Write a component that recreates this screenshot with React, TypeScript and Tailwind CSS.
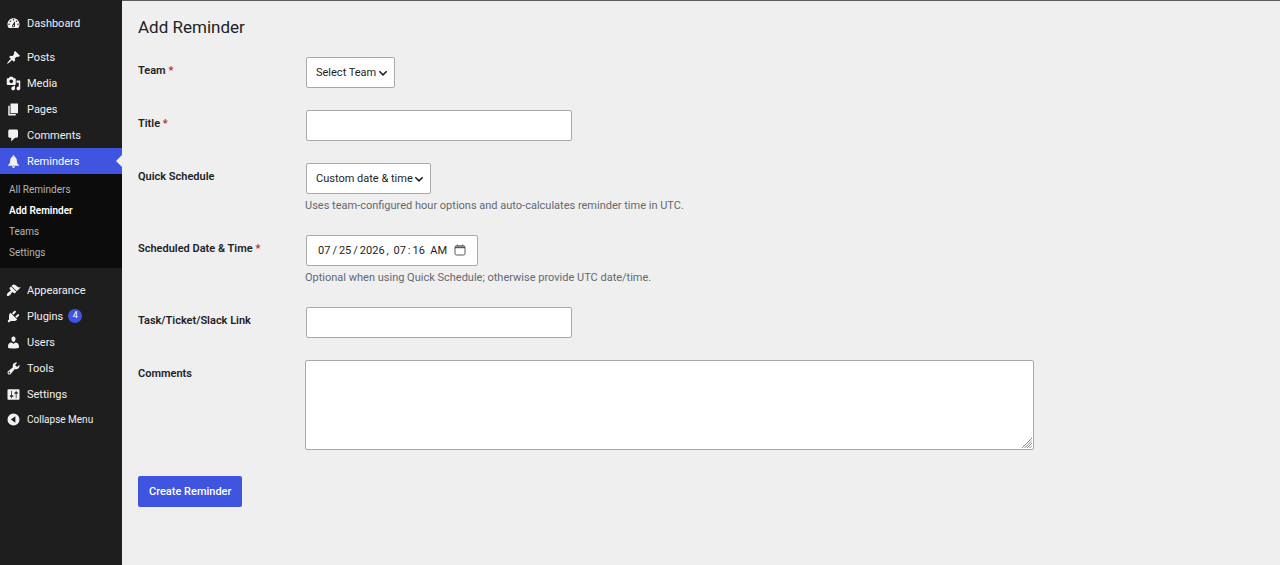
import type { ReactNode } from "react";

const icons = {
  dashboard:
    "M3.76 16h12.48c1.1-1.37 1.76-3.11 1.76-5 0-4.42-3.58-8-8-8s-8 3.58-8 8c0 1.89.66 3.63 1.76 5zM10 4c.55 0 1 .45 1 1s-.45 1-1 1-1-.45-1-1 .45-1 1-1zM6 6c.55 0 1 .45 1 1s-.45 1-1 1-1-.45-1-1 .45-1 1-1zm8 0c.55 0 1 .45 1 1s-.45 1-1 1-1-.45-1-1 .45-1 1-1zm-5.37 5.55L12 7v6c0 1.1-.9 2-2 2s-2-.9-2-2c0-.57.24-1.08.63-1.45zM4 10c.55 0 1 .45 1 1s-.45 1-1 1-1-.45-1-1 .45-1 1-1zm12 0c.55 0 1 .45 1 1s-.45 1-1 1-1-.45-1-1 .45-1 1-1zm-5 3c0-.55-.45-1-1-1s-1 .45-1 1 .45 1 1 1 1-.45 1-1z",
  posts:
    "M10.44 3.02l1.82-1.82 6.36 6.35-1.83 1.82c-1.05-.68-2.48-.57-3.41.36l-.75.75c-.92.93-1.04 2.35-.35 3.41l-1.83 1.82-2.41-2.41-2.8 2.79c-.42.42-3.38 2.71-3.8 2.29s1.86-3.39 2.28-3.81l2.79-2.79L4.1 9.36l1.83-1.82c1.05.69 2.48.57 3.4-.36l.75-.75c.93-.92 1.05-2.35.36-3.41z",
  media:
    "M13 11V4c0-.55-.45-1-1-1h-1.67L9 1H5L3.67 3H2c-.55 0-1 .45-1 1v7c0 .55.45 1 1 1h10c.55 0 1-.45 1-1zM7 4.5c1.38 0 2.5 1.12 2.5 2.5S8.38 9.5 7 9.5 4.5 8.38 4.5 7 5.62 4.5 7 4.5zM14 6h5v10.5c0 1.38-1.12 2.5-2.5 2.5S14 17.88 14 16.5s1.12-2.5 2.5-2.5c.17 0 .34.02.5.05V9h-3V6zm-4 8.05V13h2v3.5c0 1.38-1.12 2.5-2.5 2.5S7 17.88 7 16.5 8.12 14 9.5 14c.17 0 .34.02.5.05z",
  pages: "M6 15V2h10v13H6zm-1 1h8v2H3V5h2v11z",
  comments:
    "M5 2h9c1.1 0 2 .9 2 2v7c0 1.1-.9 2-2 2h-2l-5 5v-5H5c-1.1 0-2-.9-2-2V4c0-1.1.9-2 2-2z",
  bell: "M10 1.500c-.8 0-1.300.6-1.300 1.400v.7C6.900 4.200 5.800 5.900 5.600 8l-.3 3c-.1 1.200-.8 2.300-1.900 3.200-.5.400-.8.900-.8 1.400h14.800c0-.5-.3-1-.8-1.400-1.100-.9-1.800-2-1.900-3.200l-.3-3c-.2-2.100-1.300-3.800-3.100-4.400v-.7c0-.8-.5-1.400-1.300-1.400zM8 16.400c0 1.200.9 2.100 2 2.100s2-.9 2-2.100z",
  appearance:
    "M14.48 11.06L7.41 3.99l1.5-1.5c.5-.56 2.3-.47 3.51.32 1.21.8 1.43 1.28 2.91 2.1 1.18.64 2.45 1.26 4.45.85zm-.71.71L6.7 4.7 4.93 6.47c-.39.39-.39 1.02 0 1.41l1.06 1.06c.39.39.39 1.03 0 1.42-.6.6-1.43 1.11-2.21 1.69-.35.26-.7.53-1.01.84C1.43 14.23.4 16.08 1.4 17.07c.99 1 2.84-.03 4.18-1.36.31-.31.58-.66.85-1.02.57-.78 1.08-1.61 1.69-2.21.39-.39 1.02-.39 1.41 0l1.06 1.06c.39.39 1.02.39 1.41 0z",
  plugins:
    "M13.11 4.36L9.87 7.6 8 5.73l3.24-3.24c.35-.34 1.05-.2 1.56.32.52.51.66 1.21.31 1.55zm-8 1.77l.91-1.12 9.01 9.01-1.19.84c-.71.71-2.63 1.16-3.82 1.16H6.14L4.9 17.26c-.59.59-1.54.59-2.12 0-.59-.58-.59-1.53 0-2.12l1.24-1.24v-3.88c0-1.13.4-3.19 1.09-3.89zm7.26 3.97l3.24-3.24c.34-.35 1.04-.21 1.55.31.52.51.66 1.21.31 1.55l-3.24 3.25z",
  users:
    "M10 9.25c-2.27 0-2.73-3.44-2.73-3.44C7 4.02 7.82 2 9.97 2c2.16 0 2.98 2.02 2.71 3.81 0 0-.41 3.44-2.68 3.44zm0 2.57L12.72 10c2.39 0 4.52 2.33 4.52 4.53v2.49s-3.65 1.13-7.24 1.13c-3.65 0-7.24-1.13-7.24-1.13v-2.49c0-2.25 1.94-4.48 4.47-4.48z",
  tools:
    "M16.68 9.77c-1.34 1.34-3.3 1.67-4.95.99l-5.41 6.52c-.99.99-2.59.99-3.58 0s-.99-2.59 0-3.57l6.52-5.42c-.68-1.65-.35-3.61.99-4.95 1.28-1.28 3.12-1.62 4.72-1.06l-2.89 2.89 2.82 2.82 2.86-2.87c.53 1.58.18 3.39-1.08 4.65zM3.81 16.21c.4.39 1.04.39 1.43 0 .4-.4.4-1.04 0-1.43-.39-.4-1.03-.4-1.43 0-.39.39-.39 1.03 0 1.43z",
  settings:
    "M18 16V4c0-.55-.45-1-1-1H3c-.55 0-1 .45-1 1v12c0 .55.45 1 1 1h14c.55 0 1-.45 1-1zM8 11h1c.55 0 1 .45 1 1s-.45 1-1 1H8v1.500c0 .28-.22.5-.5.5s-.5-.22-.5-.5V13H6c-.55 0-1-.45-1-1s.45-1 1-1h1V5.500c0-.28.22-.5.5-.5s.5.22.5.5V11zm5-2h-1c-.55 0-1-.45-1-1s.45-1 1-1h1V5.500c0-.28.22-.5.5-.5s.5.22.5.5V7h1c.55 0 1 .45 1 1s-.45 1-1 1h-1v5.500c0 .28-.22.5-.5.5s-.5-.22-.5-.5V9z",
  collapse: "M10 2a8 8 0 1 0 0 16 8 8 0 0 0 0-16zM12.500 5.800v8.400L6.500 10z",
};

type IconName = keyof typeof icons;

function Icon({ name }: { name: IconName }) {
  return (
    <svg viewBox="0 0 20 20" className="size-[15px] shrink-0 fill-[#f3f1f1]" aria-hidden="true">
      <path fillRule="evenodd" d={icons[name]} />
    </svg>
  );
}

interface MenuItemProps {
  icon: IconName;
  label: string;
  active?: boolean;
  badge?: number;
}

function MenuItem({ icon, label, active, badge }: MenuItemProps) {
  return (
    <a
      href="#"
      className={`relative flex h-[26px] items-center gap-[5px] pl-[6px] text-[11px] ${
        active ? "bg-[#3f55e0] text-white" : "text-[#f0f0f1]"
      }`}
    >
      <Icon name={icon} />
      <span className="pl-px pt-[2px]">{label}</span>
      {badge && (
        <span className="flex size-[14px] items-center justify-center rounded-full bg-[#3f55e0] text-[9px] text-white">
          {badge}
        </span>
      )}
      {/* Arrow pointing at the content area */}
      {active && (
        <span className="absolute right-0 top-1/2 -translate-y-1/2 border-y-[6px] border-r-[6px] border-y-transparent border-r-[#efefef]" />
      )}
    </a>
  );
}

const submenu = ["All Reminders", "Add Reminder", "Teams", "Settings"];

function Sidebar() {
  return (
    <nav className="w-[122px] shrink-0 bg-[#1e1e1e] pt-[10px]">
      <MenuItem icon="dashboard" label="Dashboard" />
      <div className="mt-2">
        <MenuItem icon="posts" label="Posts" />
        <MenuItem icon="media" label="Media" />
        <MenuItem icon="pages" label="Pages" />
        <MenuItem icon="comments" label="Comments" />
        <MenuItem icon="bell" label="Reminders" active />
      </div>
      <ul className="bg-[#0c0c0c] py-[5px]">
        {submenu.map((item) => (
          <li key={item}>
            <a
              href="#"
              className={`block pl-[9px] text-[10px] leading-[21px] ${
                item === "Add Reminder" ? "font-semibold text-white" : "text-[#b4b4b4]"
              }`}
            >
              {item}
            </a>
          </li>
        ))}
      </ul>
      <div className="mt-[9px]">
        <MenuItem icon="appearance" label="Appearance" />
        <MenuItem icon="plugins" label="Plugins" badge={4} />
        <MenuItem icon="users" label="Users" />
        <MenuItem icon="tools" label="Tools" />
        <MenuItem icon="settings" label="Settings" />
      </div>
      <button
        type="button"
        className="flex h-[24px] w-full items-center gap-[5px] pl-[6px] text-[10px] text-[#f0f0f1]"
      >
        <Icon name="collapse" />
        <span className="pl-px">Collapse Menu</span>
      </button>
    </nav>
  );
}

interface FieldProps {
  id: string;
  label: string;
  required?: boolean;
  help?: string;
  children: ReactNode;
}

function Field({ id, label, required, help, children }: FieldProps) {
  return (
    <div className="grid grid-cols-[167px_minmax(0,1fr)]">
      <label htmlFor={id} className="pt-[6px] font-semibold leading-[15px] text-[#1d2327]">
        {label} {required && <span className="text-[#b32d2e]">*</span>}
      </label>
      <div>
        {children}
        {help && <p className="mt-1 leading-[15px] text-[#646970]">{help}</p>}
      </div>
    </div>
  );
}

const control = "mx-px block h-[31px] rounded-[2px] border border-[#a9a9a9] bg-white pt-[2px] text-[#1e1e1e]";

function Select({ id, option }: { id: string; option: string }) {
  return (
    <div className="relative w-fit">
      <select id={id} className={`${control} appearance-none pl-[9px] pr-[17px]`}>
        <option>{option}</option>
      </select>
      <svg
        viewBox="0 0 10 10"
        className="pointer-events-none absolute right-[8px] top-[11px] size-[10px] fill-none stroke-[#1e1e1e] stroke-[1.5]"
        aria-hidden="true"
      >
        <path d="M1.300 3.200 5 6.900l3.700-3.700" />
      </svg>
    </div>
  );
}

function DateTimeInput({ id, value }: { id: string; value: string }) {
  return (
    <div className="relative w-fit">
      <input
        id={id}
        type="datetime-local"
        defaultValue={value}
        className={`${control} w-[172px] px-[10px] [&::-webkit-calendar-picker-indicator]:ml-0 [&::-webkit-calendar-picker-indicator]:opacity-0 [&::-webkit-datetime-edit-text]:px-px`}
      />
      <svg
        viewBox="0 0 12 12"
        className="pointer-events-none absolute right-[13px] top-[9px] size-[12px] fill-none stroke-[#5a5a5a]"
        aria-hidden="true"
      >
        <rect x="1" y="1.800" width="10" height="9.200" rx="1.500" />
        <path d="M1 3.300h10" strokeWidth="1.800" />
        <path d="M3.300.500v1.500M8.700.500v1.500" />
      </svg>
    </div>
  );
}

export default function App() {
  return (
    <div className="flex min-h-screen bg-[#efefef] font-['Roboto',sans-serif] text-[11px]">
      <Sidebar />
      <main className="min-w-0 flex-1 border-t border-[#5f5c60] pl-[16px] pr-4 pt-[14px]">
        <h1 className="text-[17px] leading-[24px] text-[#1d2327]">Add Reminder</h1>
        <form className="mt-[18px]">
          <div className="flex flex-col gap-[22px]">
            <Field id="team" label="Team" required>
              <Select id="team" option="Select Team" />
            </Field>
            <Field id="title" label="Title" required>
              <input id="title" type="text" className={`${control} w-full max-w-[266px] px-2`} />
            </Field>
            <Field
              id="quick"
              label="Quick Schedule"
              help="Uses team-configured hour options and auto-calculates reminder time in UTC."
            >
              <Select id="quick" option="Custom date & time" />
            </Field>
            <Field
              id="date"
              label="Scheduled Date & Time"
              required
              help="Optional when using Quick Schedule; otherwise provide UTC date/time."
            >
              <DateTimeInput id="date" value="2026-07-25T07:16" />
            </Field>
            <Field id="link" label="Task/Ticket/Slack Link">
              <input id="link" type="url" className={`${control} w-full max-w-[266px] px-2`} />
            </Field>
            <Field id="comments" label="Comments">
              <div className="relative w-full max-w-[729px]">
                <textarea
                  id="comments"
                  className="block h-[90px] w-full resize-none rounded-[2px] border border-[#a9a9a9] bg-white px-2 py-1"
                />
                <svg
                  viewBox="0 0 10 10"
                  className="pointer-events-none absolute bottom-[2px] right-[2px] size-[10px] stroke-[#8a8a8a]"
                  aria-hidden="true"
                >
                  <path d="M0 10 10 0M2.500 10 10 2.500M5 10l5-5M7.500 10 10 7.500" />
                </svg>
              </div>
            </Field>
          </div>
          <button
            type="submit"
            className="mt-[26px] h-[31px] rounded-[2px] bg-[#3f55e0] px-[11px] pt-px font-medium text-white"
          >
            Create Reminder
          </button>
        </form>
      </main>
    </div>
  );
}
